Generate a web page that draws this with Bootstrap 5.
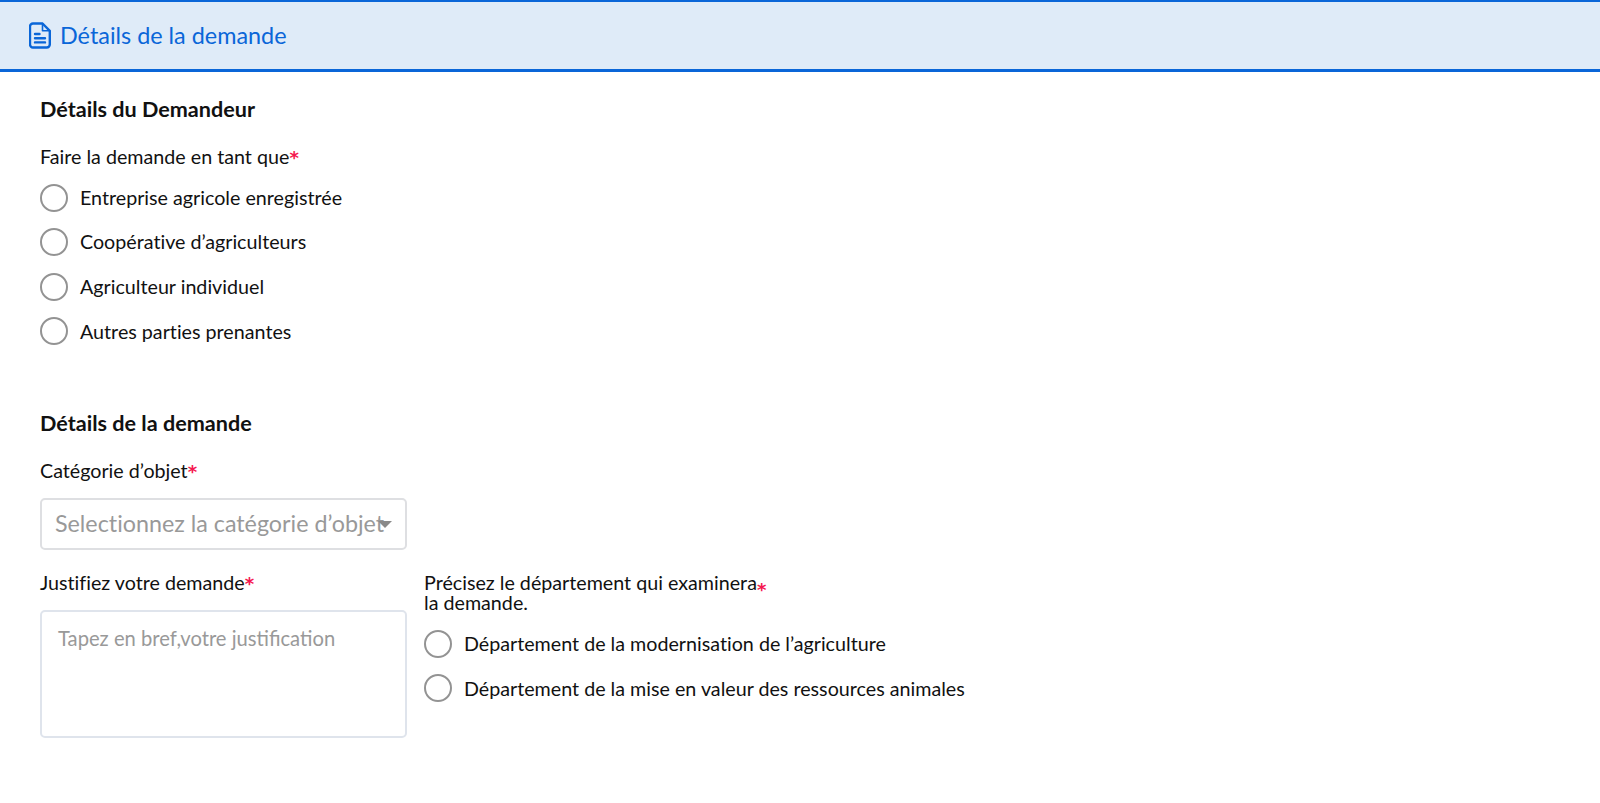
<!DOCTYPE html>
<html lang="fr">
<head>
<meta charset="utf-8">
<title>Détails de la demande</title>
<link rel="stylesheet" href="https://cdn.jsdelivr.net/npm/bootstrap@5.3.0/dist/css/bootstrap.min.css">
<style>
body{font-family:"Lato","Noto Sans",sans-serif;font-variant-ligatures:none;color:#111;background:#fff;font-size:19.7px;overflow:hidden}
.req-bar{height:72px;background:#dfebf8;border-top:2px solid #0a66d8;border-bottom:3px solid #0a66d8;padding-left:29px;color:#0a66d8;font-size:23.4px;gap:9px}
.form-zone{padding:0 40px}
.sec-title{font-size:21.6px;font-weight:700;line-height:28px;margin:0;color:#111}
.sec-one{padding-top:23px}
.sec-two{padding-top:63.5px}
.fld-label{font-size:19.7px;line-height:24px;margin:22px 0 0;display:block}
.star{color:#f5184f;font-family:"DejaVu Sans",sans-serif;font-size:18px;font-weight:700}
.opt-list{display:flex;flex-direction:column;gap:16.6px;margin-top:13.5px}
.opt-row{display:flex;align-items:center;gap:12px;height:28px;font-size:19.7px;margin:0}
.opt-row .form-check-input{width:28px;height:28px;margin:0;border:2px solid #939393;flex:none;background-color:#fff}
.sel-box{width:367px;height:52px;border:2px solid #dedfe2;border-radius:5px;color:#999;font-size:23.3px;padding-left:13px;margin-top:14px;position:relative;overflow:hidden;white-space:nowrap;font-family:inherit}
.sel-caret{width:0;height:0;border-left:7px solid transparent;border-right:7px solid transparent;border-top:7px solid #8a8a8a;position:absolute;right:13px;top:21px}
.just-col{width:367px}
.dept-col{width:700px}
.just-area{width:367px;height:128px;border:2px solid #dfe4ec;border-radius:5px;color:#999;font-size:20.2px;padding:11px 16px;margin-top:14px;resize:none;display:block;font-family:inherit}
.just-area::placeholder{color:#999;opacity:1}
.two-col{margin-top:21px;gap:17px}
.two-col .fld-label{margin-top:0}
.two-col .dept-label{line-height:20px;font-size:19.7px;margin-top:2px;max-width:360px}
.dept-col .opt-list{margin-top:17px}
.low-star{position:relative;top:6px;line-height:0}
</style>
</head>
<body>
<header class="req-bar d-flex align-items-center">
<svg width="22" height="27" viewBox="0 0 22 27" fill="none" stroke="#0a66d8" stroke-width="2.4" stroke-linejoin="round" stroke-linecap="round" aria-hidden="true"><path d="M4 1.5h9.5l7.3 7.3V22.500a3 3 0 0 1-3 3H4a3 3 0 0 1-3-3v-18a3 3 0 0 1 3-3z"/><path d="M13.500 1.500v7.300h7.300" stroke-width="1.600"/><path d="M6 12h4.500M6 16.200h10M6 20.400h10"/></svg>
<span>Détails de la demande</span>
</header>
<main class="form-zone">
<section class="sec-one">
<h2 class="sec-title">Détails du Demandeur</h2>
<label class="fld-label">Faire la demande en tant que<span class="star">*</span></label>
<div class="opt-list">
<label class="opt-row"><input class="form-check-input" type="radio" name="who">Entreprise agricole enregistrée</label>
<label class="opt-row"><input class="form-check-input" type="radio" name="who">Coopérative d’agriculteurs</label>
<label class="opt-row"><input class="form-check-input" type="radio" name="who">Agriculteur individuel</label>
<label class="opt-row"><input class="form-check-input" type="radio" name="who">Autres parties prenantes</label>
</div>
</section>
<section class="sec-two">
<h2 class="sec-title">Détails de la demande</h2>
<label class="fld-label">Catégorie d’objet<span class="star">*</span></label>
<div class="sel-box d-flex align-items-center">Selectionnez la catégorie d’objet<span class="sel-caret"></span></div>
<div class="two-col d-flex">
<div class="just-col">
<label class="fld-label">Justifiez votre demande<span class="star">*</span></label>
<textarea class="just-area" placeholder="Tapez en bref,votre justification"></textarea>
</div>
<div class="dept-col">
<label class="fld-label dept-label">Précisez le département qui examinera<span class="star low-star">*</span><br>la demande.</label>
<div class="opt-list">
<label class="opt-row"><input class="form-check-input" type="radio" name="dept">Département de la modernisation de l’agriculture</label>
<label class="opt-row"><input class="form-check-input" type="radio" name="dept">Département de la mise en valeur des ressources animales</label>
</div>
</div>
</div>
</section>
</main>
</body>
</html>
